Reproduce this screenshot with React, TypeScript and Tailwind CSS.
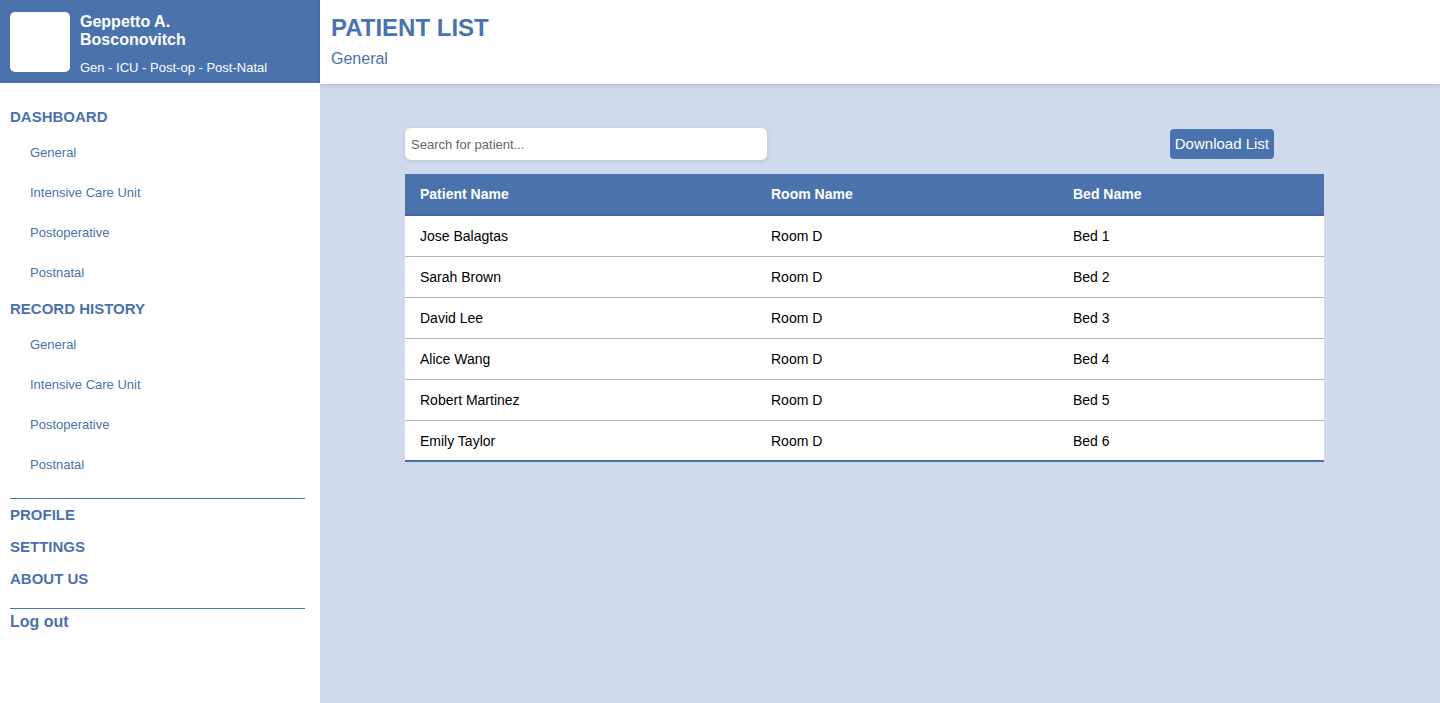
const patients = [
  { name: "Jose Balagtas", room: "Room D", bed: "Bed 1" },
  { name: "Sarah Brown", room: "Room D", bed: "Bed 2" },
  { name: "David Lee", room: "Room D", bed: "Bed 3" },
  { name: "Alice Wang", room: "Room D", bed: "Bed 4" },
  { name: "Robert Martinez", room: "Room D", bed: "Bed 5" },
  { name: "Emily Taylor", room: "Room D", bed: "Bed 6" },
];

const wards = ["General", "Intensive Care Unit", "Postoperative", "Postnatal"];

const NavGroup = ({ title }: { title: string }) => (
  <div>
    <div className="h-[32px] flex items-center px-[10px] text-[15px] font-bold text-[#4a72ad]">{title}</div>
    {wards.map((w) => (
      <div key={w} className="h-[40px] flex items-center pl-[30px] text-[13px] text-[#4a72ad]">
        {w}
      </div>
    ))}
  </div>
);

export default function App() {
  return (
    <div className="flex w-full h-[703px] overflow-hidden font-['Liberation_Sans',Arial,sans-serif] bg-[#cfdaec]">
      <aside className="w-[320px] shrink-0 bg-white flex flex-col">
        <div className="h-[83px] bg-[#4a72ad] flex items-start pt-[12px] pl-[10px] gap-[10px]">
          <div className="w-[60px] h-[60px] bg-white rounded-[5px]" />
          <div className="text-white">
            <div className="text-[16px] font-bold leading-[18px] mt-[1px]">
              Geppetto A.
              <br />
              Bosconovitch
            </div>
            <div className="text-[13px] mt-[9px]">Gen - ICU - Post-op - Post-Natal</div>
          </div>
        </div>
        <nav className="pt-[18px]">
          <NavGroup title="DASHBOARD" />
          <NavGroup title="RECORD HISTORY" />
          <div className="mt-[13px] ml-[10px] w-[295px] border-t border-[#4a72ad]" />
          {["PROFILE", "SETTINGS", "ABOUT US"].map((l) => (
            <div key={l} className="h-[32px] flex items-center pt-[1px] px-[10px] text-[15px] font-bold text-[#4a72ad]">
              {l}
            </div>
          ))}
          <div className="mt-[13px] ml-[10px] w-[295px] border-t border-[#4a72ad]" />
          <div className="h-[24px] flex items-center pt-[1px] px-[10px] text-[16px] font-bold text-[#4a72ad]">Log out</div>
        </nav>
      </aside>

      <main className="flex-1 flex flex-col">
        <header className="h-[84px] bg-white shadow-[0_2px_4px_rgba(0,0,0,0.12)] pl-[11px] pt-[14px] relative z-10">
          <h1 className="text-[24px] font-bold text-[#4a72ad] leading-[28px]">PATIENT LIST</h1>
          <div className="text-[16px] text-[#4a72ad] mt-[5px]">General</div>
        </header>

        <section className="pt-[44px] pl-[85px]">
          <div className="w-[919px]">
            <div className="flex items-center justify-between pr-[50px]">
              <input
                placeholder="Search for patient..."
                className="w-[362px] h-[32px] rounded-[6px] bg-white px-[6px] text-[13px] text-[#333] placeholder:text-[#666] shadow-[0_1px_4px_rgba(0,0,0,0.12)] outline-none"
              />
              <button className="h-[30px] px-[5px] pt-[1px] rounded-[4px] bg-[#4a72ad] text-white text-[15px]">Download List</button>
            </div>

            <div className="mt-[14px]">
              <div className="grid grid-cols-[351px_302px_1fr] h-[42px] items-center pt-[1px] bg-[#4a72ad] border-b-[2px] border-[#41659c] text-white text-[14px] font-bold">
                <div className="pl-[15px]">Patient Name</div>
                <div className="pl-[15px]">Room Name</div>
                <div className="pl-[15px]">Bed Name</div>
              </div>
              {patients.map((p, i) => (
                <div
                  key={p.bed}
                  className={
                    i === patients.length - 1
                      ? "grid grid-cols-[351px_302px_1fr] h-[41px] items-center pt-[1px] bg-white border-b-[2px] border-[#4a72ad] text-[14px] text-black"
                      : "grid grid-cols-[351px_302px_1fr] h-[41px] items-center bg-white border-b border-[#a9b6cc] text-[14px] text-black"
                  }
                >
                  <div className="pl-[15px]">{p.name}</div>
                  <div className="pl-[15px]">{p.room}</div>
                  <div className="pl-[15px]">{p.bed}</div>
                </div>
              ))}
            </div>
          </div>
        </section>
      </main>
    </div>
  );
}
